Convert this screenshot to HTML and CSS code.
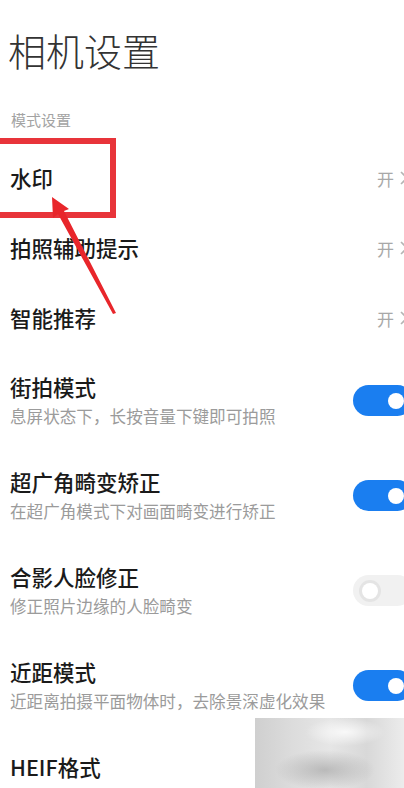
FILE: index.html
```html
<!DOCTYPE html>
<html lang="zh-CN">
<head>
<meta charset="utf-8">
<title>相机设置</title>
<link rel="stylesheet" href="styles.css">
</head>
<body>
<div class="page">
  <header class="header"><h1 class="title">相机设置</h1></header>
  <div class="section-label">模式设置</div>
  <div class="list">
    <div class="row simple">
      <span class="row-title">水印</span>
      <span class="value">开<svg class="chev" viewBox="0 0 10 16"><path d="M2 2l6 6-6 6" fill="none" stroke="#b5b5b5" stroke-width="1.6"/></svg></span>
    </div>
    <div class="row simple">
      <span class="row-title">拍照辅助提示</span>
      <span class="value">开<svg class="chev" viewBox="0 0 10 16"><path d="M2 2l6 6-6 6" fill="none" stroke="#b5b5b5" stroke-width="1.6"/></svg></span>
    </div>
    <div class="row simple">
      <span class="row-title">智能推荐</span>
      <span class="value">开<svg class="chev" viewBox="0 0 10 16"><path d="M2 2l6 6-6 6" fill="none" stroke="#b5b5b5" stroke-width="1.6"/></svg></span>
    </div>
    <div class="row double">
      <div class="text"><div class="row-title">街拍模式</div><div class="row-sub">息屏状态下，长按音量下键即可拍照</div></div>
      <span class="toggle on"><span class="knob"></span></span>
    </div>
    <div class="row double">
      <div class="text"><div class="row-title">超广角畸变矫正</div><div class="row-sub">在超广角模式下对画面畸变进行矫正</div></div>
      <span class="toggle on"><span class="knob"></span></span>
    </div>
    <div class="row double">
      <div class="text"><div class="row-title">合影人脸修正</div><div class="row-sub">修正照片边缘的人脸畸变</div></div>
      <span class="toggle off"><span class="knob"></span></span>
    </div>
    <div class="row double">
      <div class="text"><div class="row-title">近距模式</div><div class="row-sub">近距离拍摄平面物体时，去除景深虚化效果</div></div>
      <span class="toggle on"><span class="knob"></span></span>
    </div>
    <div class="row double">
      <div class="text"><div class="row-title">HEIF格式</div><div class="row-sub">更高效的照片格式，节省存储空间</div></div>
    </div>
  </div>

  <div class="highlight-box"></div>
  <svg class="arrow" viewBox="0 0 404 788" width="404" height="788">
    <polygon points="52,197 69,209 64,211 116,313 113,314 58,214 53,218" fill="#e8262b"/>
  </svg>
  <div class="blur-patch"></div>
</div>
</body>
</html>
```
FILE: styles.css
```css
html, body {
  margin: 0;
  padding: 0;
  background: #ffffff;
  overflow: hidden;
}
body {
  width: 404px;
  height: 788px;
  font-family: "Noto Sans CJK SC", "Noto Sans", sans-serif;
  color: #1c1c1c;
}
.page {
  position: relative;
  width: 404px;
  height: 788px;
  overflow: hidden;
}
.header {
  height: 100px;
  padding: 25px 0 0 8px;
  box-sizing: border-box;
}
.title {
  margin: 0;
  font-size: 38px;
  line-height: 50px;
  font-weight: 300;
  color: #333;
}
.section-label {
  margin-top: 10px;
  padding-left: 11px;
  font-size: 15px;
  line-height: 20px;
  color: #a3a3a3;
}
.list {
  margin-top: 13px;
}
.row {
  display: flex;
  align-items: center;
  justify-content: space-between;
  padding-left: 10px;
  box-sizing: border-box;
}
.row.simple {
  height: 70px;
}
.row.double {
  height: 95px;
}
.row-title {
  font-size: 21.5px;
  line-height: 28px;
  font-weight: 500;
  color: #1a1a1a;
}
.row-sub {
  margin-top: 3px;
  font-size: 16.6px;
  line-height: 24px;
  color: #9b9b9b;
}
.value {
  display: flex;
  align-items: center;
  gap: 5px;
  margin-right: -5px;
  font-size: 17px;
  color: #a8a8a8;
}
.chev {
  width: 10px;
  height: 16px;
}
.toggle {
  position: relative;
  flex: none;
  width: 60px;
  height: 31px;
  border-radius: 16px;
  margin-right: -9px;
  box-sizing: border-box;
}
.toggle.on {
  background: #1a7ef0;
}
.toggle.off {
  background: #f1f1f1;
}
.knob {
  position: absolute;
  top: 50%;
  width: 16px;
  height: 16px;
  margin-top: -8px;
  border-radius: 50%;
  background: #fff;
}
.toggle.on .knob {
  right: 9px;
}
.toggle.off .knob {
  left: 9px;
  box-shadow: 0 0 0 3px #e4e4e4;
}
.highlight-box {
  position: absolute;
  left: -10px;
  top: 138px;
  width: 126px;
  height: 80px;
  border: 6px solid #e8343a;
  box-sizing: border-box;
}
.arrow {
  position: absolute;
  left: 0;
  top: 0;
}
.blur-patch {
  position: absolute;
  left: 255px;
  top: 718px;
  width: 149px;
  height: 70px;
  background:
    radial-gradient(ellipse 40px 14px at 90px 14px, rgba(255,255,255,0.8), rgba(255,255,255,0) 100%),
    radial-gradient(ellipse 50px 20px at 70px 52px, rgba(150,150,150,0.55), rgba(150,150,150,0) 100%),
    linear-gradient(90deg, #cfcfcf 0%, #dcdcdc 25%, #e6e6e6 50%, #d8d8d8 75%, #ececec 100%);
}
```
